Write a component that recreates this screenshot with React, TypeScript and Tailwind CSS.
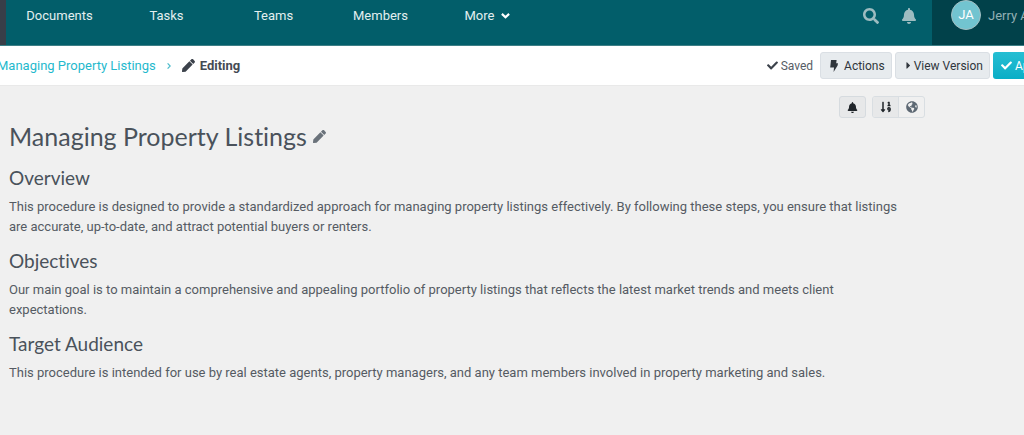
import type { ReactNode } from "react";
import {
  FaBell,
  FaCaretRight,
  FaCheck,
  FaGlobeAmericas,
  FaPen,
  FaSearch,
  FaSortNumericDown,
} from "react-icons/fa";

const navItems = ["Documents", "Tasks", "Teams", "Members"];

const sections = [
  {
    title: "Overview",
    body: "This procedure is designed to provide a standardized approach for managing property listings effectively. By following these steps, you ensure that listings are accurate, up-to-date, and attract potential buyers or renters.",
  },
  {
    title: "Objectives",
    body: "Our main goal is to maintain a comprehensive and appealing portfolio of property listings that reflects the latest market trends and meets client expectations.",
  },
  {
    title: "Target Audience",
    body: "This procedure is intended for use by real estate agents, property managers, and any team members involved in property marketing and sales.",
  },
];

function BoltIcon() {
  return (
    <svg viewBox="0 0 8 12" className="h-3 w-2" fill="currentColor" aria-hidden="true">
      <path d="M1 0H6.6L6.2 3.3H8L7.6 5.6L3.6 12L4 7.4H0.2Z" />
    </svg>
  );
}

function ActionButton({ children }: { children: ReactNode }) {
  return (
    <button
      type="button"
      className="flex h-[27px] shrink-0 items-center rounded-[3px] border border-[#dadfe4] bg-[#e7ebee] pr-1.5 pl-[9px] text-xs text-[#30363c]"
    >
      {children}
    </button>
  );
}

function Header() {
  return (
    <header className="flex h-[46px] border-b border-[#3d7f86] bg-[#025e6a] text-[13px]">
      <div className="w-1.5 shrink-0 bg-[#383e48]" />
      <nav className="flex shrink-0 leading-8 text-[#e3eff0]">
        {navItems.map((item) => (
          <a key={item} href="#" className="w-[107px] text-center">
            {item}
          </a>
        ))}
        <button type="button" className="flex h-8 w-[107px] items-center justify-center gap-[7px]">
          More
          <svg viewBox="0 0 9 6" className="h-1.5 w-[9px]" fill="none" stroke="#ffffff" strokeWidth="2.2" aria-hidden="true">
            <path d="M0.9 0.9L4.5 4.3L8.1 0.9" />
          </svg>
        </button>
      </nav>
      <div className="ml-auto flex h-8 shrink-0 items-center gap-[22px] pr-[15px] text-[#9dbcc0]">
        <button type="button" aria-label="Search">
          <FaSearch className="size-4" />
        </button>
        <button type="button" aria-label="Notifications">
          <FaBell className="size-4" />
        </button>
      </div>
      <div className="flex w-[92px] shrink-0 items-start gap-[7px] overflow-hidden bg-[#01414a] pl-[19px]">
        <span className="flex size-[30px] shrink-0 items-center justify-center rounded-full border border-[#a3bfc3] bg-[#72c4d0] text-[13px] text-white">
          JA
        </span>
        <span className="leading-8 whitespace-nowrap text-[#93b0b4]">Jerry A</span>
      </div>
    </header>
  );
}

function Toolbar() {
  return (
    <div className="flex h-10 items-center justify-between overflow-hidden border-b border-[#e9e9e9] bg-white text-[13px]">
      <div className="-ml-[3px] flex shrink-0 items-center">
        <a href="#" className="text-[#1fb9cd]">
          Managing Property Listings
        </a>
        <svg viewBox="0 0 4 6" className="mx-[11px] h-1.5 w-1" fill="none" stroke="#4dbccb" strokeWidth="1.2" aria-hidden="true">
          <path d="M0.6 0.4L3.2 3L0.6 5.6" />
        </svg>
        <FaPen className="mr-[5px] size-[13px] text-[#3c424b]" />
        <span className="font-bold text-[#454b54]">Editing</span>
      </div>
      <div className="flex shrink-0 items-center gap-[3px]">
        <span className="mr-1 flex items-center gap-[3px] text-xs text-[#565d66]">
          <FaCheck className="size-[11px] text-[#3c424b]" />
          Saved
        </span>
        <ActionButton>
          <span className="mr-1.5">
            <BoltIcon />
          </span>
          Actions
        </ActionButton>
        <ActionButton>
          <FaCaretRight className="-ml-0.5 size-[11px]" />
          View Version
        </ActionButton>
        <button
          type="button"
          className="flex h-[27px] w-[31px] items-center gap-[3px] overflow-hidden rounded-l-[3px] bg-linear-to-b from-[#24bed3] to-[#08aec6] pl-2 text-xs whitespace-nowrap text-white"
        >
          <FaCheck className="size-[11px] shrink-0" />
          Ap
        </button>
      </div>
    </div>
  );
}

export default function App() {
  return (
    <div className="min-h-screen overflow-x-hidden bg-[#f0f0f0] font-[Roboto,sans-serif]">
      <Header />
      <Toolbar />
      <main className="mr-[99px] ml-[9px] pt-2.5 pb-8">
        <div className="flex justify-end gap-1.5">
          <button
            type="button"
            aria-label="Subscribe"
            className="flex h-[22px] w-[27px] items-center justify-center rounded-[3px] border border-[#d6dbdf] bg-[#e7e8e9] text-[#20252a]"
          >
            <FaBell className="size-[11px]" />
          </button>
          <div className="flex h-[22px] w-[53px] overflow-hidden rounded-[3px] border border-[#d9dee2]">
            <button
              type="button"
              aria-label="Numbering"
              className="flex flex-1 items-center justify-center border-r border-[#d9dee2] bg-[#e7e8e9] text-[#20252a]"
            >
              <FaSortNumericDown className="size-3" />
            </button>
            <button type="button" aria-label="Language" className="flex flex-1 items-center justify-center text-[#5d6873]">
              <FaGlobeAmericas className="size-3" />
            </button>
          </div>
        </div>
        <div className="mb-1 flex items-center gap-1.5 text-[#4a525b]">
          <h1 className="font-[Lato,sans-serif] text-[25px] leading-9 [font-variant-ligatures:none]">
            Managing Property Listings
          </h1>
          <button type="button" aria-label="Edit title">
            <FaPen className="size-[13px] text-[#6a727a]" />
          </button>
        </div>
        <div className="pr-3">
          {sections.map((section) => (
            <section key={section.title} className="mb-1 pt-2">
              <h2 className="mb-[7px] font-[Lato,sans-serif] text-[19px] leading-6 text-[#4a525b] [font-variant-ligatures:none]">
                {section.title}
              </h2>
              <p className="text-[13px] leading-5 text-[#555b63]">{section.body}</p>
            </section>
          ))}
        </div>
      </main>
    </div>
  );
}
